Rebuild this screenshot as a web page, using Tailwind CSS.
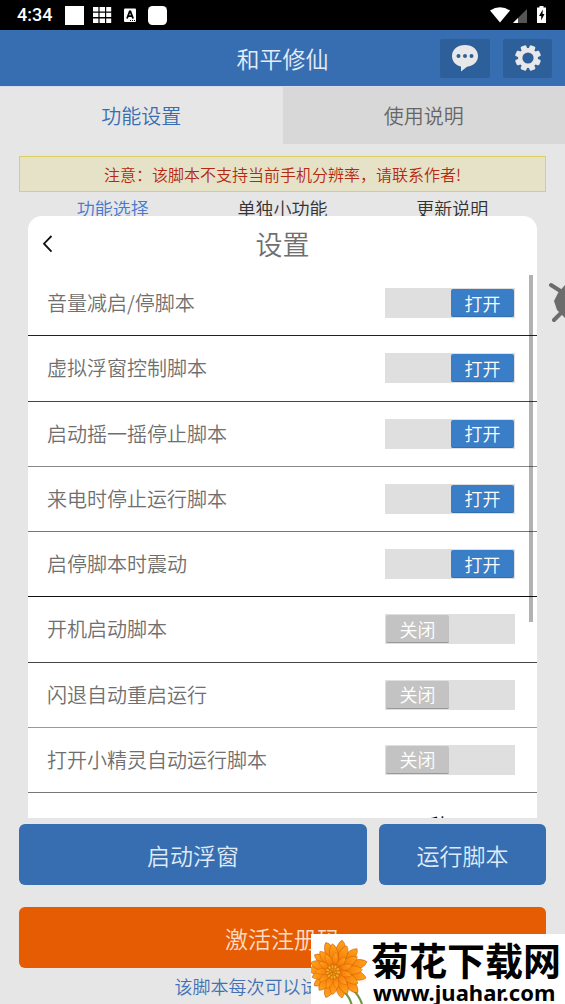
<!DOCTYPE html>
<html lang="zh-CN">
<head>
<meta charset="utf-8">
<meta name="viewport" content="width=device-width, initial-scale=1">
<title>和平修仙</title>
<script src="https://cdn.jsdelivr.net/npm/@tailwindcss/browser@4"></script>
</head>
<body class="bg-[#e6e6e6] font-['Noto_Sans_CJK_SC',sans-serif] font-[350]">
<div class="relative flex h-screen flex-col overflow-hidden">
  <!-- Status bar -->
  <div class="flex h-[30px] shrink-0 items-center bg-black pl-[17px] pr-[18px] text-white">
    <span class="w-12 font-['Roboto',sans-serif] text-[18px] leading-5 font-medium">4:34</span>
    <svg class="h-[30px] w-[104px]" viewBox="0 0 104 30" fill="#fff" aria-hidden="true">
      <path d="M0 6h19v19H0z"/>
      <path d="M28 7h5.400v4.400H28zM34.600 7h5.400v4.400h-5.400zM41.200 7h5v4.400h-5zM28 12.700h5.400v4.400H28zM34.600 12.700h5.400v4.400h-5.400zM41.200 12.700h5v4.400h-5zM28 18.400h5.400v4.600H28zM34.600 18.400h5.400v4.600h-5.400zM41.200 18.400h5v4.600h-5z"/>
      <rect x="59" y="8.500" width="12" height="13.500" rx="1"/>
      <path d="M62 18.500l2.700-7h.7l2.700 7M63 16.200h4" fill="none" stroke="#000" stroke-width="1.800"/>
      <path d="M65 20h1v1h-1zM67 20h1v1h-1zM69 20h1v1h-1z" fill="#000"/>
      <rect x="83" y="6" width="19" height="19" rx="4.500"/>
    </svg>
    <svg class="ml-auto h-[30px] w-[57px]" viewBox="0 0 57 30" aria-hidden="true">
      <path d="M0 10.500Q10 4 20 10.500L10 22.500z" fill="#fff"/>
      <path d="M37 9v14H23z" fill="#555"/>
      <path d="M28 18v5h-5z" fill="#fff"/>
      <path d="M49.500 6h4v1.500H56V23h-9V7.500h2.500z" fill="#fff"/>
      <path d="M52.800 9.500L49 16h2.200v4.500L54.500 14h-2z" fill="#000"/>
    </svg>
  </div>

  <!-- App header -->
  <header class="grid h-14 shrink-0 grid-cols-[1fr_auto_1fr] items-center bg-[#376db1] px-[13px] text-[#e3edf8]">
    <h1 class="col-start-2 text-[23px] leading-8 font-[350]">和平修仙</h1>
    <div class="flex justify-end gap-[13px]">
      <button type="button" aria-label="消息" class="flex h-[39px] w-[50px] items-center justify-center rounded-xs bg-[#2d5f9b]">
        <svg class="size-7" viewBox="0 0 28 28" aria-hidden="true"><path d="M14 1C6.500 1 1 5.500 1 12c0 5.500 4 9.500 9 10.500v5l6-4.800C22.500 22 27 18 27 12 27 5.500 21.500 1 14 1z" fill="#e8e8e8"/><g fill="#2d5f9b"><circle cx="7.500" cy="12" r="2"/><circle cx="14" cy="12" r="2"/><circle cx="20.500" cy="12" r="2"/></g></svg>
      </button>
      <button type="button" aria-label="设置" class="flex h-[39px] w-[49px] items-center justify-center rounded-xs bg-[#2d5f9b]">
        <svg class="size-[26px]" viewBox="-13 -13 26 26" aria-hidden="true">
          <g fill="#e8e8e8"><rect x="-3" y="-13" width="6" height="26" rx="1.500" transform="rotate(22.500)"/><rect x="-3" y="-13" width="6" height="26" rx="1.500" transform="rotate(-22.500)"/><rect x="-3" y="-13" width="6" height="26" rx="1.500" transform="rotate(67.500)"/><rect x="-3" y="-13" width="6" height="26" rx="1.500" transform="rotate(-67.500)"/><circle r="10"/></g>
          <circle r="5.600" fill="#2d5f9b"/>
        </svg>
      </button>
    </div>
  </header>

  <nav class="grid h-[58px] shrink-0 grid-cols-2 text-[20px] leading-7" aria-label="主选项卡">
    <button type="button" class="border-t border-[#d5dde8] text-[#376db1]">功能设置</button>
    <button type="button" class="border-t border-[#d5dde8] bg-[#d8d8d8] text-[#666]">使用说明</button>
  </nav>

  <p class="mx-[19px] mt-3 flex h-9 shrink-0 items-center justify-center border border-[#dccf66] bg-[#e6e2c8] text-[16px] leading-6 text-[#b32a10]">注意：该脚本不支持当前手机分辨率，请联系作者!</p>

  <nav class="mx-7 flex h-6 shrink-0 justify-around overflow-hidden text-[18px] leading-8 text-[#333]" aria-label="功能分类">
    <button type="button" class="flex-1 self-start text-[#4779cf]">功能选择</button>
    <button type="button" class="flex-1 self-start">单独小功能</button>
    <button type="button" class="flex-1 self-start">更新说明</button>
  </nav>

  <!-- Settings sheet -->
  <main class="relative mx-7 min-h-0 flex-1 overflow-hidden rounded-t-[14px] bg-white text-[#6f6f6f]">
    <div class="grid h-[55px] grid-cols-[1fr_auto_1fr] items-center">
      <button type="button" aria-label="返回" class="ml-[11px] flex size-6 items-center">
        <svg class="h-5 w-4" viewBox="0 0 16 20" fill="none" stroke="#111" stroke-width="1.800" aria-hidden="true"><path d="M12.500 2L5 9.700l7.500 8"/></svg>
      </button>
      <h2 class="text-[27px] leading-9 font-[350]">设置</h2>
    </div>
    <div class="grid h-[522px] grid-rows-8 text-[20px] leading-7">
      <label class="flex items-center justify-between border-b border-[#222] pl-[19px] pr-[22px]">音量减启/停脚本
        <span class="relative flex h-[30px] w-[130px] justify-end p-px text-[18px] text-white"><input type="checkbox" checked class="absolute inset-0 size-full appearance-none bg-[#dfdfdf]"><span class="relative flex w-[63px] items-center justify-center rounded-xs border-b border-[#336fb0] bg-[#397ec7]">打开</span></span></label>
      <label class="flex items-center justify-between border-b border-[#444] pl-[19px] pr-[22px]">虚拟浮窗控制脚本
        <span class="relative flex h-[30px] w-[130px] justify-end p-px text-[18px] text-white"><input type="checkbox" checked class="absolute inset-0 size-full appearance-none bg-[#dfdfdf]"><span class="relative flex w-[63px] items-center justify-center rounded-xs border-b border-[#336fb0] bg-[#397ec7]">打开</span></span></label>
      <label class="flex items-center justify-between border-b border-[#888] pl-[19px] pr-[22px]">启动摇一摇停止脚本
        <span class="relative flex h-[30px] w-[130px] justify-end p-px text-[18px] text-white"><input type="checkbox" checked class="absolute inset-0 size-full appearance-none bg-[#dfdfdf]"><span class="relative flex w-[63px] items-center justify-center rounded-xs border-b border-[#336fb0] bg-[#397ec7]">打开</span></span></label>
      <label class="flex items-center justify-between border-b border-[#777] pl-[19px] pr-[22px]">来电时停止运行脚本
        <span class="relative flex h-[30px] w-[130px] justify-end p-px text-[18px] text-white"><input type="checkbox" checked class="absolute inset-0 size-full appearance-none bg-[#dfdfdf]"><span class="relative flex w-[63px] items-center justify-center rounded-xs border-b border-[#336fb0] bg-[#397ec7]">打开</span></span></label>
      <label class="flex items-center justify-between border-b border-[#111] pl-[19px] pr-[22px]">启停脚本时震动
        <span class="relative flex h-[30px] w-[130px] justify-end p-px text-[18px] text-white"><input type="checkbox" checked class="absolute inset-0 size-full appearance-none bg-[#dfdfdf]"><span class="relative flex w-[63px] items-center justify-center rounded-xs border-b border-[#336fb0] bg-[#397ec7]">打开</span></span></label>
      <label class="flex items-center justify-between border-b border-[#444] pl-[19px] pr-[22px]">开机启动脚本
        <span class="relative flex h-[30px] w-[130px] p-px text-[18px] text-white"><input type="checkbox" class="absolute inset-0 size-full appearance-none bg-[#dfdfdf]"><span class="relative flex w-[63px] items-center justify-center rounded-xs border-b border-[#989898] bg-[#c3c3c3]">关闭</span></span></label>
      <label class="flex items-center justify-between border-b border-[#999] pl-[19px] pr-[22px]">闪退自动重启运行
        <span class="relative flex h-[30px] w-[130px] p-px text-[18px] text-white"><input type="checkbox" class="absolute inset-0 size-full appearance-none bg-[#dfdfdf]"><span class="relative flex w-[63px] items-center justify-center rounded-xs border-b border-[#989898] bg-[#c3c3c3]">关闭</span></span></label>
      <label class="flex items-center justify-between border-b border-[#777] pl-[19px] pr-[22px]">打开小精灵自动运行脚本
        <span class="relative flex h-[30px] w-[130px] p-px text-[18px] text-white"><input type="checkbox" class="absolute inset-0 size-full appearance-none bg-[#dfdfdf]"><span class="relative flex w-[63px] items-center justify-center rounded-xs border-b border-[#989898] bg-[#c3c3c3]">关闭</span></span></label>
    </div>
    <div class="flex h-[65px] items-center justify-between pl-[19px] pr-[88px] text-[20px] leading-7">
      <span class="pt-1">定时停止的时间</span><span class="font-normal text-black">秒</span>
    </div>
    <div class="absolute top-[59px] right-1 h-[347px] w-1 bg-black/30"></div>
  </main>

  <!-- Actions -->
  <div class="mx-[19px] mt-1.5 grid shrink-0 grid-cols-[25fr_12fr] gap-3 text-[23px] leading-8 text-[#dfeaf7]">
    <button type="button" class="h-[61px] rounded-md bg-[#376db1]">启动浮窗</button>
    <button type="button" class="h-[61px] rounded-md bg-[#376db1]">运行脚本</button>
  </div>
  <button type="button" class="mx-[19px] mt-[22px] h-[61px] shrink-0 rounded-md bg-[#e65c02] text-[23px] leading-8 text-[#fbdcc4]">激活注册码</button>
  <p class="h-9 shrink-0 text-center text-[18px] leading-9 text-[#4272b5]">该脚本每次可以试用五分钟</p>

  <!-- Floating assistant peeking in from the edge -->
  <svg class="absolute top-[280px] right-0 h-11 w-[18px]" viewBox="0 0 18 44" aria-hidden="true"><g stroke="#6c6c6c" stroke-width="4" stroke-linecap="round"><path d="M4 5l11 7M7 40l9-9"/></g><path d="M18 5L11 13 7 21l3 9 8 8z" fill="#6c6c6c"/></svg>

  <!-- Site mark -->
  <div class="absolute right-0 bottom-0 flex h-[70px] w-[254px] overflow-hidden bg-white text-black">
    <svg class="h-[70px] w-[60px] shrink-0" viewBox="0 0 60 70" aria-hidden="true">
      <defs>
        <linearGradient id="petal" x1="0" y1="0" x2="0" y2="1"><stop offset="0" stop-color="#ffa51c"/><stop offset=".5" stop-color="#f9820c"/><stop offset="1" stop-color="#c34a05"/></linearGradient>
        <path id="p" d="M0 0C-5-6-6-18-4-24Q-2-29 0-30Q3-28 4-24C6-18 5-6 0 0z" fill="url(#petal)" stroke="#cc5a04" stroke-width=".6"/>
        <g id="ring"><use href="#p"/><use href="#p" transform="rotate(34) scale(.95)"/><use href="#p" transform="rotate(66)"/><use href="#p" transform="rotate(98) scale(.97)"/><use href="#p" transform="rotate(131)"/><use href="#p" transform="rotate(164) scale(.94)"/><use href="#p" transform="rotate(196)"/><use href="#p" transform="rotate(229) scale(.95)"/><use href="#p" transform="rotate(262)"/><use href="#p" transform="rotate(295) scale(.93)"/><use href="#p" transform="rotate(328)"/></g>
      </defs>
      <path d="M33 58q6 5 8 14M41 55q7 6 10 15" fill="none" stroke="#6c9640" stroke-width="2.200"/>
      <use href="#ring" transform="translate(27 36) rotate(8)"/>
      <use href="#ring" transform="translate(25 36) rotate(24) scale(.88)"/>
      <use href="#ring" transform="translate(23 37) rotate(6) scale(.62)"/>
      <circle cx="22" cy="38" r="7.500" fill="#d97609"/>
      <circle cx="22" cy="38" r="5.500" fill="none" stroke="#f5b42c" stroke-width="2.500" stroke-dasharray="1.500 1.500"/>
      <circle cx="22" cy="38" r="2.500" fill="none" stroke="#f0a51c" stroke-width="2" stroke-dasharray="1 1.500"/>
    </svg>
    <div class="whitespace-nowrap">
      <p class="mt-1 text-[38px] leading-[42px] font-bold">菊花下载网</p>
      <p class="pl-0.5 font-['Noto_Sans',sans-serif] text-[22px] leading-6 font-bold">www.juahar.com</p>
    </div>
  </div>
</div>
</body>
</html>
